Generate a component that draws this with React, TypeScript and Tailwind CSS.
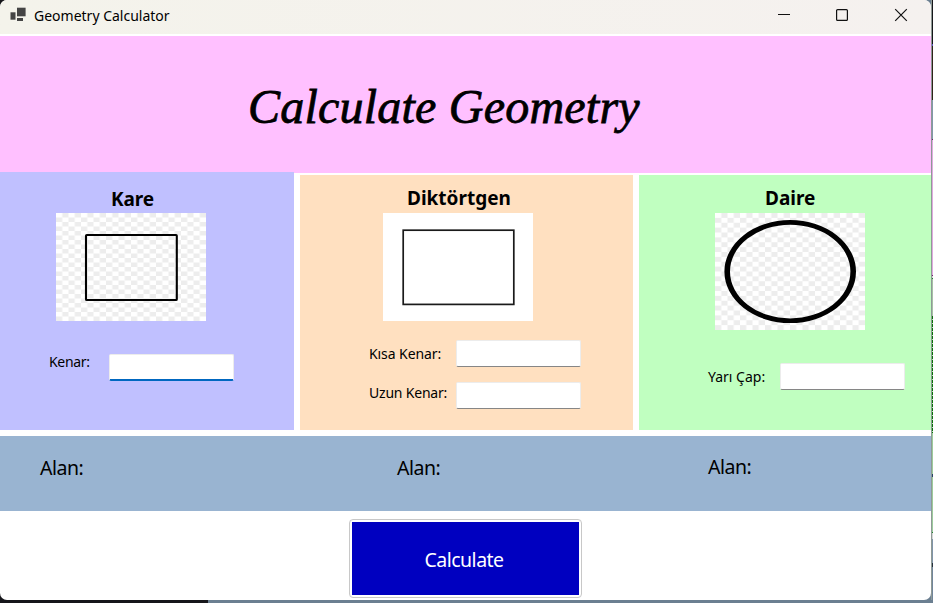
import React from "react";

function TextInput({ className, focused = false }: { className: string; focused?: boolean }) {
  return (
    <input
      type="text"
      className={`block shrink-0 rounded-[2px] border border-[#ececec] bg-white px-1 text-[14px] outline-none ${
        focused ? "border-b-2 border-b-[#0067c0]" : "border-b-[#868686]"
      } ${className}`}
    />
  );
}

function Checker({ id, w, h }: { id: string; w: number; h: number }) {
  return (
    <>
      <defs>
        <pattern id={id} width={w * 2} height={h * 2} patternUnits="userSpaceOnUse">
          <rect x={w} y="0" width={w} height={h} fill="#ededed" />
          <rect x="0" y={h} width={w} height={h} fill="#ededed" />
        </pattern>
      </defs>
      <rect width="150" height="120" fill="#fff" />
      <rect width="150" height="120" fill={`url(#${id})`} />
    </>
  );
}

function TitleBar() {
  return (
    <header className="flex h-[34px] items-start bg-gradient-to-r from-[#f4f3eb] to-[#f5f1ef]">
      <svg className="ml-[10px] mt-[7px] shrink-0" width="17" height="15" viewBox="0 0 17 15">
        <rect x="0.5" y="5.3" width="5" height="7.4" fill="#444" />
        <rect x="7" y="0.7" width="8.6" height="8.6" fill="#444" />
        <rect x="7" y="11" width="6" height="3" fill="#444" />
      </svg>
      <span className="ml-[7px] mt-[6px] flex-1 whitespace-nowrap text-[14px] leading-5">
        Geometry Calculator
      </span>
      <svg className="mr-[22px] mt-[7px] shrink-0" width="132" height="16" viewBox="0 0 132 16" fill="none" stroke="#111">
        <path d="M1 7.5h12" />
        <rect x="59.6" y="2.6" width="10.8" height="10.8" rx="1" strokeWidth="1.2" />
        <path d="M118.2 2.2l11.6 11.6M129.8 2.2l-11.6 11.6" strokeWidth="1.2" />
      </svg>
    </header>
  );
}

function DesktopEdge() {
  return (
    <div className="flex w-[2px] shrink-0 flex-col border-l border-[#8f9a96]">
      <div className="h-[44px] bg-[#16161a]" />
      <div className="h-[2px] bg-[#5a4fc4]" />
      <div className="h-[54px] bg-[#30231a]" />
      <div className="h-[39px] bg-[#8296aa]" />
      <div className="h-px bg-[#702070]" />
      <div className="h-[135px] bg-[#dfaadf]" />
      <div className="h-px bg-[#702070]" />
      <div className="h-[2px] bg-[#d8d8d8]" />
      <div className="h-px bg-[#208030]" />
      <div className="h-[37px] bg-[#a5c0a5]" />
      <div className="h-[117px] bg-[repeating-linear-gradient(#0a700a_0_3px,#b5e0b5_3px_4px)]" />
      <div className="h-[41px] bg-[#9ccb9c]" />
      <div className="h-[3px] bg-[#29406a]" />
      <div className="h-[55px] bg-[#9ccb9c]" />
      <div className="h-px bg-[#208030]" />
      <div className="h-[6px] bg-[#d5d5d5]" />
      <div className="h-[24px] bg-[#8094a8]" />
      <div className="h-[4px] bg-[#27303c]" />
      <div className="flex-1 bg-[#71859a]" />
    </div>
  );
}

export default function App() {
  return (
    <div className="flex h-[603px] w-[933px] flex-col overflow-hidden bg-[#16161a] font-['Noto_Sans','Open_Sans',sans-serif] text-black">
      <div className="flex h-[600px]">
        <div className="flex w-[931px] shrink-0 bg-[linear-gradient(90deg,#16161a_208px,#6b7f91_208px)]">
          <main className="flex w-full flex-col overflow-hidden rounded-[7px] bg-white">
            <TitleBar />
            <section className="mt-[2px] h-[137px] shrink-0 bg-[#ffc0ff] pl-[248px] pt-[41px]">
              <h1 className="whitespace-nowrap font-['Liberation_Serif',serif] text-[48px] italic leading-[60px] tracking-[0.22px] [-webkit-text-stroke:0.8px_black]">
                Calculate Geometry
              </h1>
            </section>

            <div className="-mt-px flex h-[258px] shrink-0 gap-[6px]">
              <section className="w-[294px] bg-[#c0c0ff] pt-[14px]">
                <h2 className="pl-[111px] text-[19px] font-bold leading-[26px] tracking-[-0.1px]">Kare</h2>
                <svg className="ml-[56px] mt-px block" width="150" height="108" viewBox="0 0 150 108">
                  <Checker id="square-grid" w={6.25} h={4.5} />
                  <rect x="30" y="22" width="90.8" height="65" rx="0.8" fill="none" stroke="#000" strokeWidth="2.1" />
                </svg>
                <div className="flex pl-[49px] pt-[32px]">
                  <label className="w-[60px] whitespace-nowrap text-[14px] leading-[17px] tracking-[-0.3px]">Kenar:</label>
                  <TextInput focused className="mt-px h-[27px] w-[125px]" />
                </div>
              </section>

              <section className="mt-[3px] w-[333px] bg-[#ffe0c0] pt-[10px]">
                <h2 className="pl-[107px] text-[19px] font-bold leading-[26px]">Diktörtgen</h2>
                <svg className="ml-[83px] mt-[2px] block" width="150" height="108" viewBox="0 0 150 108">
                  <rect width="150" height="108" fill="#fff" />
                  <rect x="20.2" y="17.2" width="110.6" height="74.2" fill="none" stroke="#1a1a1a" strokeWidth="1.7" />
                </svg>
                <div className="flex pl-[69px] pt-[19px]">
                  <label className="w-[87px] whitespace-nowrap pt-1 text-[14px] leading-5 tracking-[-0.08px]">Kısa Kenar:</label>
                  <TextInput className="h-[27px] w-[125px]" />
                </div>
                <div className="flex pl-[69px] pt-[15px]">
                  <label className="w-[87px] whitespace-nowrap pt-px text-[14px] leading-5 tracking-[-0.2px]">Uzun Kenar:</label>
                  <TextInput className="h-[27px] w-[125px]" />
                </div>
              </section>

              <section className="mt-[3px] w-[292px] bg-[#c0ffc0] pt-[10px]">
                <h2 className="pl-[126px] text-[19px] font-bold leading-[26px]">Daire</h2>
                <svg className="ml-[76px] mt-[2px] block" width="150" height="117" viewBox="0 0 150 117">
                  <Checker id="circle-grid" w={6.25} h={4.875} />
                  <path
                    fillRule="evenodd"
                    d="M9.4 58.6a65.8 51.5 0 1 0 131.6 0a65.8 51.5 0 1 0 -131.6 0zM15 58.6a60.2 46.8 0 1 1 120.4 0a60.2 46.8 0 1 1 -120.4 0z"
                  />
                </svg>
                <div className="flex pl-[69px] pt-[33px]">
                  <label className="w-[72px] whitespace-nowrap pt-1 text-[14px] leading-5">Yarı Çap:</label>
                  <TextInput className="h-[27px] w-[125px]" />
                </div>
              </section>
            </div>

            <section className="mt-[6px] flex h-[75px] shrink-0 bg-[#99b4d1] pt-[19px] text-[19.5px] leading-[26px] tracking-[-0.5px]">
              <span className="w-[357px] pl-[40px]">Alan:</span>
              <span className="w-[351px] pl-[40px]">Alan:</span>
              <span className="-mt-px">Alan:</span>
            </section>

            <button className="ml-[349px] mt-[8px] h-[79px] w-[233px] shrink-0 rounded-[4px] border border-[#c8c8c8] bg-white p-[2px]">
              <span className="flex h-full w-full items-center justify-center bg-[#0000c0] pr-[3px] pt-[3px] text-[19.5px] leading-[26px] tracking-[-0.5px] text-white">
                Calculate
              </span>
            </button>
          </main>
        </div>
        <DesktopEdge />
      </div>
      <div className="flex h-[3px]">
        <div className="w-[208px] bg-[#16161a]" />
        <div className="flex-1 bg-[#6b7f91]" />
      </div>
    </div>
  );
}
